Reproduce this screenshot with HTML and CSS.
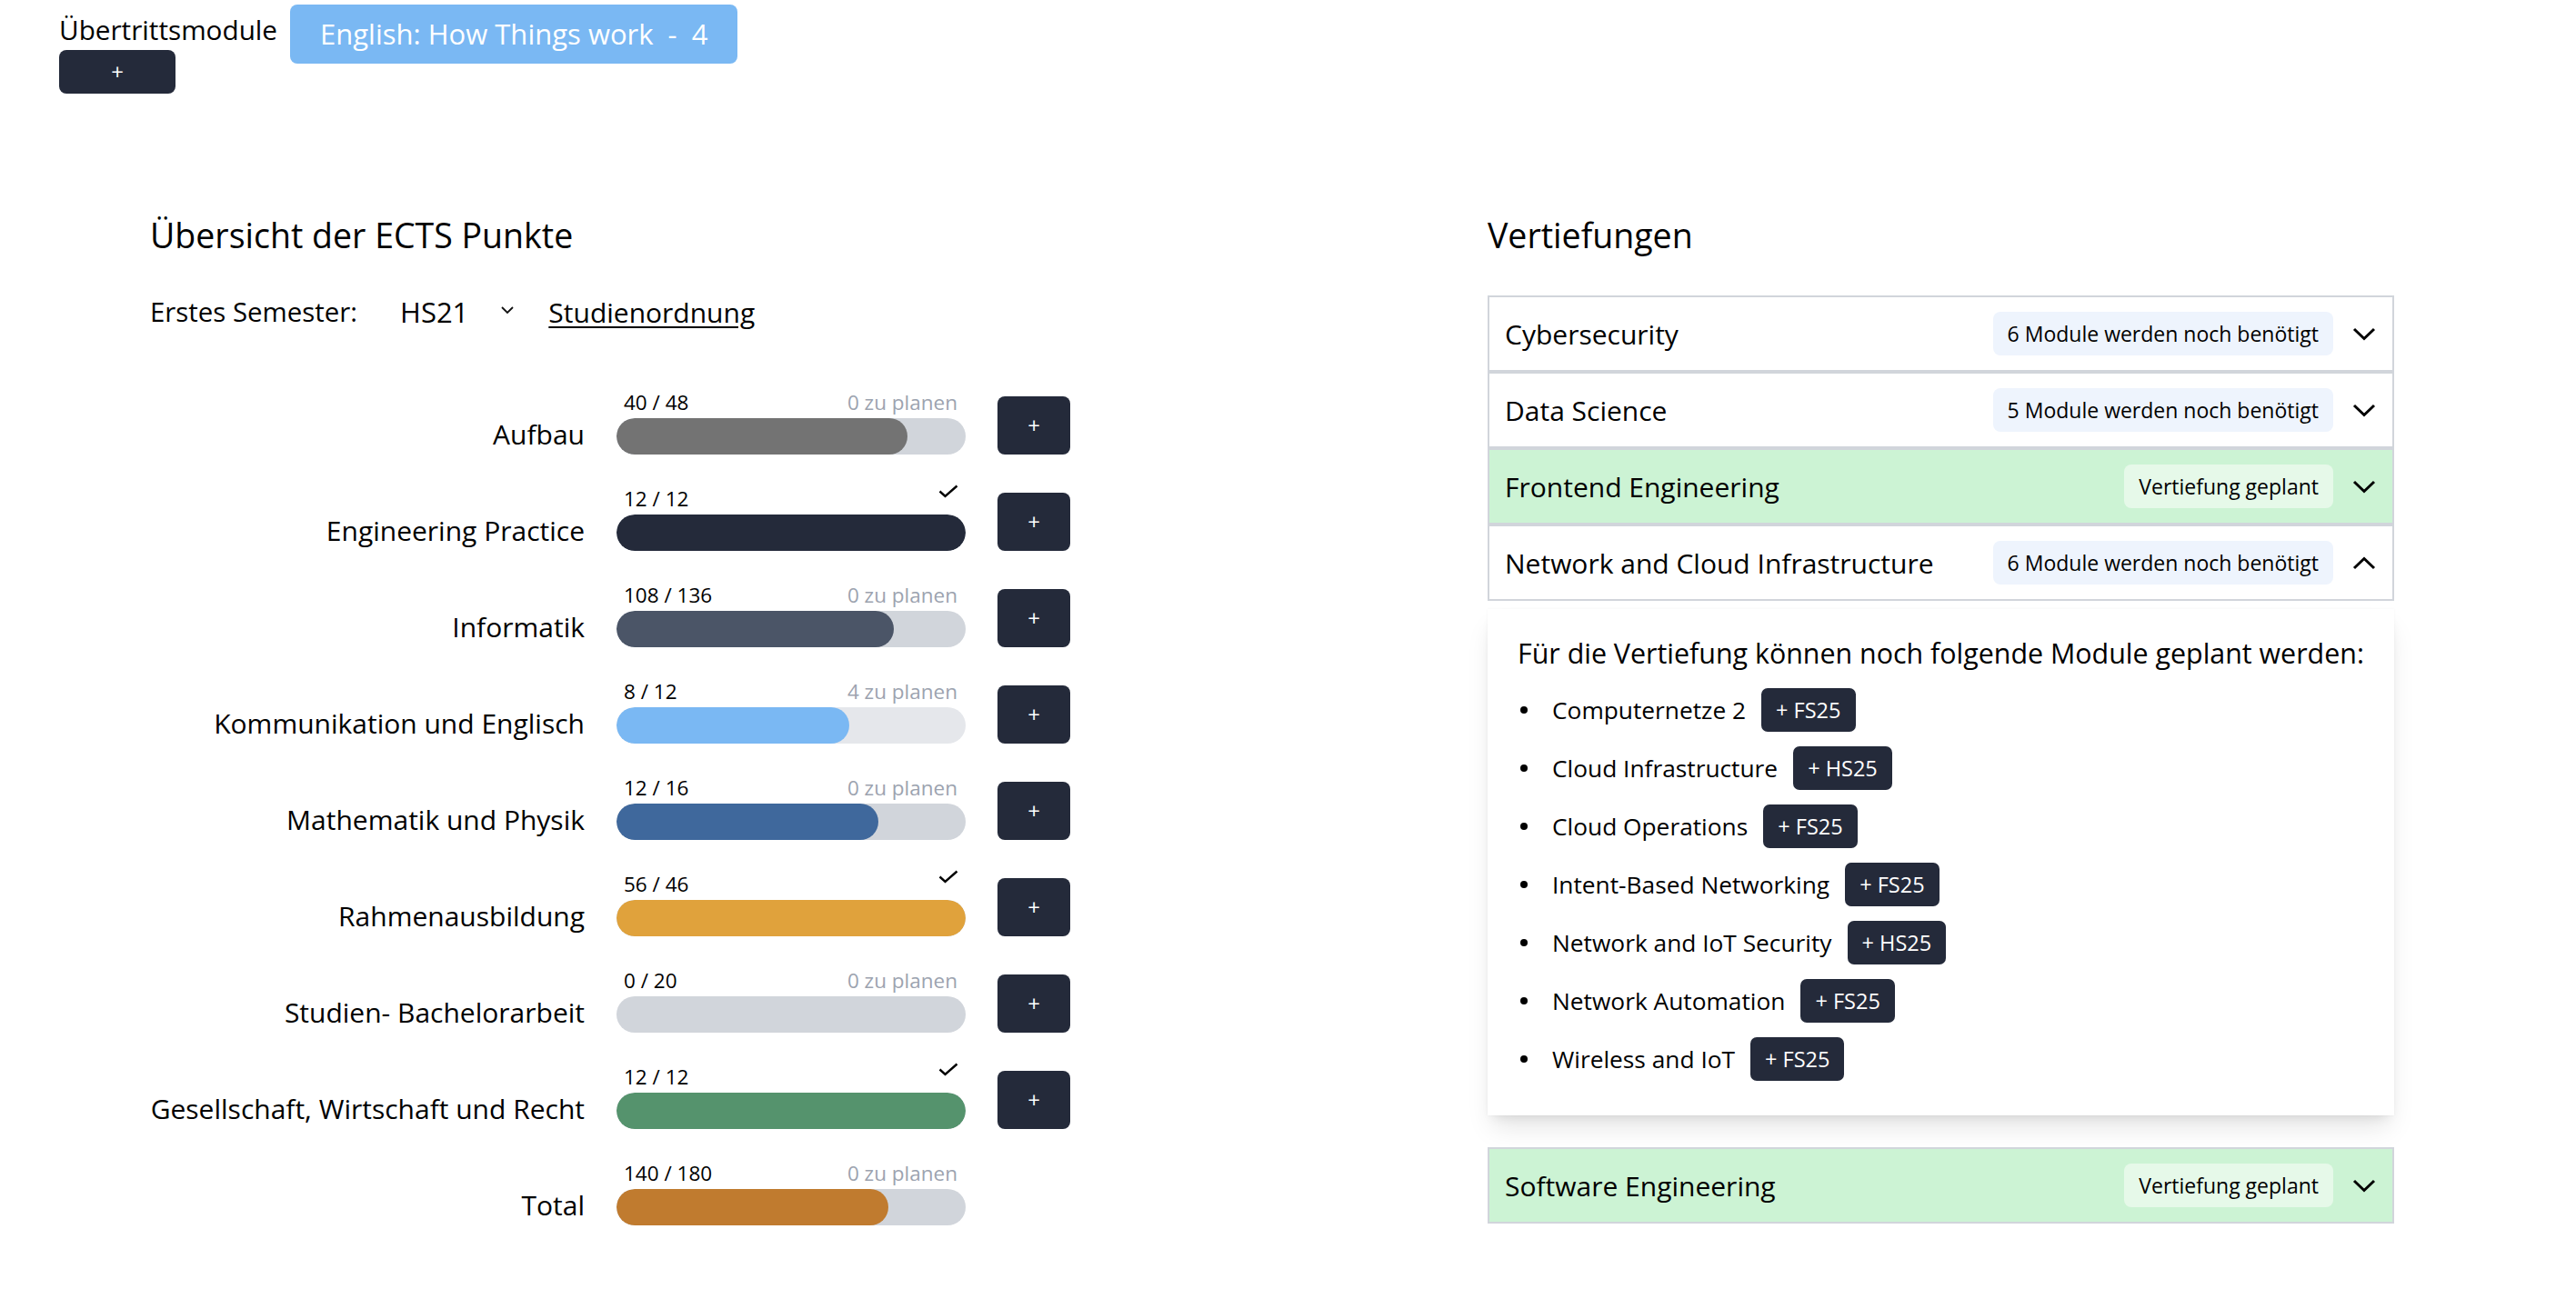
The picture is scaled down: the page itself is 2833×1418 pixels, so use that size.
FILE: index.html
```html
<!DOCTYPE html>
<html lang="de">
<head>
<meta charset="utf-8">
<title>ECTS Übersicht</title>
<link rel="stylesheet" href="styles.css">
</head>
<body>
<header class="top">
  <div class="transfer">
    <div class="transfer-label">Übertrittsmodule</div>
    <button class="btn-dark btn-add-top">+</button>
  </div>
  <div class="chip">English: How Things work &nbsp;-&nbsp; 4</div>
</header>

<main class="main">
  <section class="ects">
    <h2 class="title title-left">Übersicht der ECTS Punkte</h2>
    <div class="semester">
      <span class="sem-label">Erstes Semester:</span>
      <span class="sem-value">HS21</span>
      <svg class="sem-chevron" viewBox="0 0 18 10" width="18" height="10"><path d="M3 2 L9 8 L15 2" fill="none" stroke="#111" stroke-width="1.8"/></svg>
      <a class="sem-link">Studienordnung</a>
    </div>

    <div class="rows">
      <div class="row">
        <div class="label">Aufbau</div>
        <div class="barcol">
          <div class="barhead"><span>40 / 48</span><span class="muted">0 zu planen</span></div>
          <div class="track"><div class="fill" style="width:83.33%;background:#737373"></div></div>
        </div>
        <button class="btn-dark btn-add">+</button>
      </div>
      <div class="row">
        <div class="label">Engineering Practice</div>
        <div class="barcol">
          <div class="barhead"><span>12 / 12</span><svg class="check" viewBox="0 0 22 15" width="22" height="15"><path d="M1.5 7.5 L7.5 13 L20.5 1.5" fill="none" stroke="#000" stroke-width="2.4"/></svg></div>
          <div class="track"><div class="fill" style="width:100%;background:#242a3a"></div></div>
        </div>
        <button class="btn-dark btn-add">+</button>
      </div>
      <div class="row">
        <div class="label">Informatik</div>
        <div class="barcol">
          <div class="barhead"><span>108 / 136</span><span class="muted">0 zu planen</span></div>
          <div class="track"><div class="fill" style="width:79.41%;background:#4b5567"></div></div>
        </div>
        <button class="btn-dark btn-add">+</button>
      </div>
      <div class="row">
        <div class="label">Kommunikation und Englisch</div>
        <div class="barcol">
          <div class="barhead"><span>8 / 12</span><span class="muted">4 zu planen</span></div>
          <div class="track track-light"><div class="fill" style="width:66.67%;background:#7ab8f3"></div></div>
        </div>
        <button class="btn-dark btn-add">+</button>
      </div>
      <div class="row">
        <div class="label">Mathematik und Physik</div>
        <div class="barcol">
          <div class="barhead"><span>12 / 16</span><span class="muted">0 zu planen</span></div>
          <div class="track"><div class="fill" style="width:75%;background:#3f689c"></div></div>
        </div>
        <button class="btn-dark btn-add">+</button>
      </div>
      <div class="row">
        <div class="label">Rahmenausbildung</div>
        <div class="barcol">
          <div class="barhead"><span>56 / 46</span><svg class="check" viewBox="0 0 22 15" width="22" height="15"><path d="M1.5 7.5 L7.5 13 L20.5 1.5" fill="none" stroke="#000" stroke-width="2.4"/></svg></div>
          <div class="track"><div class="fill" style="width:100%;background:#e0a23c"></div></div>
        </div>
        <button class="btn-dark btn-add">+</button>
      </div>
      <div class="row">
        <div class="label">Studien- Bachelorarbeit</div>
        <div class="barcol">
          <div class="barhead"><span>0 / 20</span><span class="muted">0 zu planen</span></div>
          <div class="track"><div class="fill" style="width:0%;background:#737373"></div></div>
        </div>
        <button class="btn-dark btn-add">+</button>
      </div>
      <div class="row">
        <div class="label">Gesellschaft, Wirtschaft und Recht</div>
        <div class="barcol">
          <div class="barhead"><span>12 / 12</span><svg class="check" viewBox="0 0 22 15" width="22" height="15"><path d="M1.5 7.5 L7.5 13 L20.5 1.5" fill="none" stroke="#000" stroke-width="2.4"/></svg></div>
          <div class="track"><div class="fill" style="width:100%;background:#55936d"></div></div>
        </div>
        <button class="btn-dark btn-add">+</button>
      </div>
      <div class="row">
        <div class="label">Total</div>
        <div class="barcol">
          <div class="barhead"><span>140 / 180</span><span class="muted">0 zu planen</span></div>
          <div class="track"><div class="fill" style="width:77.78%;background:#c07b2f"></div></div>
        </div>
      </div>
    </div>
  </section>

  <section class="spec">
    <h2 class="title title-right">Vertiefungen</h2>
    <div class="acc">
      <div class="acc-item">
        <span class="acc-title">Cybersecurity</span>
        <span class="badge">6 Module werden noch benötigt</span>
        <svg class="chev" viewBox="0 0 26 15" width="26" height="15"><path d="M2 2 L13 12.5 L24 2" fill="none" stroke="#000" stroke-width="3"/></svg>
      </div>
      <div class="acc-item">
        <span class="acc-title">Data Science</span>
        <span class="badge">5 Module werden noch benötigt</span>
        <svg class="chev" viewBox="0 0 26 15" width="26" height="15"><path d="M2 2 L13 12.5 L24 2" fill="none" stroke="#000" stroke-width="3"/></svg>
      </div>
      <div class="acc-item planned">
        <span class="acc-title">Frontend Engineering</span>
        <span class="badge badge-green">Vertiefung geplant</span>
        <svg class="chev" viewBox="0 0 26 15" width="26" height="15"><path d="M2 2 L13 12.5 L24 2" fill="none" stroke="#000" stroke-width="3"/></svg>
      </div>
      <div class="acc-item">
        <span class="acc-title">Network and Cloud Infrastructure</span>
        <span class="badge">6 Module werden noch benötigt</span>
        <svg class="chev" viewBox="0 0 26 15" width="26" height="15"><path d="M2 13 L13 2.5 L24 13" fill="none" stroke="#000" stroke-width="3"/></svg>
      </div>
    </div>

    <div class="panel">
      <p class="panel-head">Für die Vertiefung können noch folgende Module geplant werden:</p>
      <ul class="mods">
        <li><span>Computernetze 2</span><button class="btn-dark btn-sem">+ FS25</button></li>
        <li><span>Cloud Infrastructure</span><button class="btn-dark btn-sem">+ HS25</button></li>
        <li><span>Cloud Operations</span><button class="btn-dark btn-sem">+ FS25</button></li>
        <li><span>Intent-Based Networking</span><button class="btn-dark btn-sem">+ FS25</button></li>
        <li><span>Network and IoT Security</span><button class="btn-dark btn-sem">+ HS25</button></li>
        <li><span>Network Automation</span><button class="btn-dark btn-sem">+ FS25</button></li>
        <li><span>Wireless and IoT</span><button class="btn-dark btn-sem">+ FS25</button></li>
      </ul>
    </div>

    <div class="acc acc-single">
      <div class="acc-item planned">
        <span class="acc-title">Software Engineering</span>
        <span class="badge badge-green">Vertiefung geplant</span>
        <svg class="chev" viewBox="0 0 26 15" width="26" height="15"><path d="M2 2 L13 12.5 L24 2" fill="none" stroke="#000" stroke-width="3"/></svg>
      </div>
    </div>
  </section>
</main>
</body>
</html>
```
FILE: styles.css
```css
* { box-sizing: border-box; }

body {
  margin: 0;
  font-family: "Open Sans", "Noto Sans", sans-serif;
  font-size: 30px;
  line-height: 45px;
  color: #000;
  background: #fff;
}

button {
  font-family: inherit;
  border: 0;
  cursor: pointer;
}

.btn-dark {
  background: #242a3a;
  color: #fff;
  border-radius: 8px;
}

/* top area */
.top {
  display: flex;
  align-items: flex-start;
  gap: 14px;
  padding: 5px 0 0 65px;
}

.transfer {
  display: flex;
  flex-direction: column;
  align-items: flex-start;
  padding-top: 5px;
}

.transfer-label {
  line-height: 45px;
  font-size: 29.7px;
}

.btn-add-top {
  width: 128px;
  height: 48px;
  font-size: 24px;
  line-height: 48px;
  padding: 0;
}

.chip {
  background: #7ab8f3;
  color: #fff;
  font-size: 31px;
  line-height: 65px;
  height: 65px;
  padding: 0 33px;
  border-radius: 8px;
  white-space: nowrap;
}

/* main layout */
.main {
  display: grid;
  grid-template-columns: 1471px 997px;
  padding: 128px 0 60px 165px;
}

.title {
  margin: 0;
  font-size: 37.5px;
  line-height: 56px;
  font-weight: 400;
}

.title-left { margin-bottom: 34px; }
.title-right { margin-bottom: 38px; }

/* semester row */
.semester {
  display: flex;
  align-items: center;
  height: 45px;
  font-size: 29.4px;
}

.sem-value { margin-left: 47px; font-size: 31px; }
.sem-chevron { margin-left: 34px; margin-top: -6px; }
.sem-link {
  margin-left: 36px;
  font-size: 30px;
  text-decoration: underline;
  text-decoration-thickness: 2px;
  text-underline-offset: 4px;
  color: #000;
}

/* ECTS rows */
.rows {
  display: flex;
  flex-direction: column;
  gap: 32px;
  margin-top: 60px;
}

.row {
  display: grid;
  grid-template-columns: 478px 384px 80px;
  column-gap: 35px;
  align-items: end;
}

.label {
  text-align: right;
  white-space: nowrap;
  line-height: 45px;
}

.barcol {
  display: flex;
  flex-direction: column;
}

.barhead {
  display: flex;
  justify-content: space-between;
  align-items: flex-start;
  font-size: 22.5px;
  line-height: 34px;
  height: 34px;
  padding: 0 9px 0 8px;
}

.muted { color: #9ca3af; }

.check { margin-top: 1px; margin-right: -1px; }

.track {
  height: 40px;
  border-radius: 20px;
  background: #d1d5db;
  overflow: hidden;
}

.track-light { background: #e5e7eb; }

.fill {
  height: 100%;
  border-radius: 20px;
}

.btn-add {
  width: 80px;
  height: 64px;
  font-size: 24px;
  line-height: 64px;
  padding: 0;
}

/* accordion */
.acc {
  display: flex;
  flex-direction: column;
}

.acc-item {
  display: flex;
  align-items: center;
  height: 84px;
  border: 2px solid #d1d5db;
  padding: 0 18px 0 17px;
  background: #fff;
}

.acc-item.planned { background: #ccf3d4; }

.acc-title {
  flex: 1;
  white-space: nowrap;
}

.badge {
  height: 48px;
  line-height: 48px;
  padding: 0 16px;
  font-size: 23px;
  background: #eef4fd;
  border-radius: 8px;
  white-space: nowrap;
}

.badge-green { background: #e6f9e9; }

.chev { margin-left: 21px; }

.panel {
  margin-top: 9px;
  background: #fff;
  padding: 26px 33px 38px 33px;
  box-shadow: 0 18px 27px -5px rgba(0,0,0,0.10), 0 7px 12px -6px rgba(0,0,0,0.10), 0 0 3px rgba(0,0,0,0.04);
}

.panel-head {
  margin: 0 0 16px 0;
  white-space: nowrap;
  font-size: 30.4px;
}

.mods {
  list-style: none;
  margin: 0;
  padding: 0;
  display: flex;
  flex-direction: column;
  gap: 16px;
  font-size: 26.3px;
}

.mods li {
  display: flex;
  align-items: center;
  height: 48px;
}

.mods li::before {
  content: "";
  width: 8px;
  height: 8px;
  border-radius: 50%;
  background: #000;
  margin: 0 27px 0 3px;
}

.btn-sem {
  margin-left: 17px;
  height: 48px;
  padding: 0 16px;
  font-size: 23.5px;
  line-height: 48px;
  border-radius: 7px;
}

.acc-single { margin-top: 35px; }
```
